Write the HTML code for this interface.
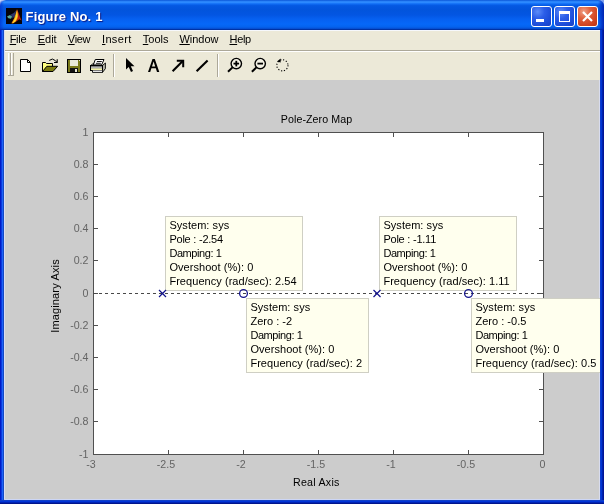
<!DOCTYPE html>
<html><head><meta charset="utf-8"><title>Figure No. 1</title>
<style>
html,body{margin:0;padding:0;background:#fff;}
body{width:604px;height:504px;overflow:hidden;position:relative;font-family:"Liberation Sans",sans-serif;}
#win{position:absolute;left:0;top:0;width:604px;height:504px;overflow:hidden;background:#0831d9;will-change:transform;}
#titlebar{position:absolute;left:0;top:0;width:604px;height:30px;border-radius:6px 6px 0 0;
background:linear-gradient(to bottom,#0a56d8 0%,#2f8cff 6%,#2a88ff 9%,#0f6cf4 13%,#0458e2 19%,#0254dc 33%,#0356e2 50%,#0660f0 63%,#0668f8 80%,#0564f0 88%,#0558e0 93.3%,#0448c8 96.6%,#0030a0 98.5%,#002e9a 100%);}
#title{position:absolute;left:25.6px;top:9px;font:bold 13px "Liberation Sans",sans-serif;color:#fff;text-shadow:1px 1px 1px #0a1883;white-space:nowrap;letter-spacing:0.15px;}
#lb{position:absolute;left:0;top:30px;width:4px;height:474px;background:linear-gradient(to right,#001ac8 0,#001ac8 25%,#0a3ade 25%,#0a3ade 50%,#1c62f8 50%,#1c62f8 75%,#1448c4 75%,#1448c4 100%);}
#rb{position:absolute;left:600px;top:30px;width:4px;height:474px;background:linear-gradient(to right,#0c3cd0 0,#0c3cd0 25%,#0034d4 25%,#0034d4 50%,#0022ac 50%,#0022ac 75%,#001498 75%,#001498 100%);}
#bb{position:absolute;left:0;top:500px;width:604px;height:4px;background:linear-gradient(to bottom,#1040c8 0,#1040c8 25%,#0034d8 25%,#0034d8 50%,#0024b4 50%,#0024b4 75%,#00148c 75%,#00148c 100%);}
#client{position:absolute;left:4px;top:30px;width:596px;height:470px;background:#ece9d8;}
#menubar{position:absolute;left:0;top:0;width:596px;height:20px;background:#ece9d8;}
.mi{position:absolute;top:3px;font:11px "Liberation Sans",sans-serif;color:#000;white-space:nowrap;transform-origin:0 0;}
.mi u{text-decoration:underline;text-underline-offset:1px;}
#sep1{position:absolute;left:0;top:20px;width:596px;height:1px;background:#aca899;}
#sep2{position:absolute;left:0;top:21px;width:596px;height:1px;background:#fff;}
#toolbar{position:absolute;left:0;top:22px;width:596px;height:28px;background:#ece9d8;}
#fig{position:absolute;left:1px;top:50px;width:595px;height:419px;background:#cccccc;overflow:hidden;}
.tip{position:absolute;background:#ffffee;border:1px solid #cfcfc4;box-sizing:border-box;font:11px/14px "Liberation Sans",sans-serif;color:#000;white-space:nowrap;padding:1px 0 0 3.4px;}
.tl{position:absolute;font:10.67px "Liberation Sans",sans-serif;color:#646464;white-space:nowrap;line-height:12px;height:12px;}
.lab{position:absolute;font:10.67px "Liberation Sans",sans-serif;color:#000;white-space:nowrap;line-height:12px;height:12px;}
.cb{position:absolute;top:6px;width:21px;height:21px;box-sizing:border-box;border:1px solid #fff;border-radius:3px;}
.cbb{background:radial-gradient(circle at 30% 25%,#5c8cf8 0%,#2c5ee8 35%,#1c4cd8 70%,#1840c4 100%);}
.cbr{background:radial-gradient(circle at 30% 25%,#f0a088 0%,#e0603c 35%,#d04420 70%,#b83414 100%);}
</style></head><body>
<div id="win">
<div style="position:absolute;left:0;top:0;width:604px;height:10px;background:linear-gradient(to right,#c8d8f8 0,#c8d8f8 50%,#7f9fec 50%,#7f9fec 100%)"></div>
<div id="titlebar"><div style="position:absolute;right:0;top:0;width:6px;height:30px;border-radius:0 6px 0 0;background:linear-gradient(to right,rgba(0,40,190,0) 0,rgba(0,40,190,0.55) 50%,rgba(0,30,170,0.9) 100%)"></div><div style="position:absolute;left:0;top:0;width:4px;height:30px;border-radius:6px 0 0 0;background:linear-gradient(to right,rgba(0,40,200,0.6) 0,rgba(0,60,220,0) 100%)"></div></div>
<svg style="position:absolute;left:6px;top:8px" width="16" height="16" viewBox="0 0 16 16">
<rect width="16" height="16" fill="#05030a"/>
<path d="M1 8.6 L4 7 L6.2 8.6 L5 10.8 L2.4 10.2 Z" fill="#5aa896"/>
<path d="M4 7 L8 4.8 L10 2.6 L9.4 8 L6.4 10.4 L6.2 8.6 Z" fill="#2c3468"/>
<path d="M9 14.5 L10 9 L11 1.2 L12.6 5 L14 9 L15.6 12.4 L13.4 11.2 L11.6 12.4 Z" fill="#b8200f"/>
<path d="M5.4 15.2 L8 10.6 L9.6 6 L11 1.2 L12 6 L11.7 10 L9.8 13.6 L7 15.6 Z" fill="#f08a12"/>
<path d="M6.6 15 L9.2 10 L10.5 5 L11 2.6 L11.5 8.6 L9.9 12.5 L8 14.6 Z" fill="#ffe030"/>
</svg>
<div id="title">Figure No. 1</div>
<div class="cb cbb" style="left:531px"><div style="position:absolute;left:4px;top:12px;width:8px;height:3px;background:#fff"></div></div>
<div class="cb cbb" style="left:554px"><div style="position:absolute;left:4px;top:4px;width:11px;height:11px;box-sizing:border-box;border:1px solid #fff;border-top:3px solid #fff"></div></div>
<div class="cb cbr" style="left:577px"><svg style="position:absolute;left:0;top:0" width="19" height="19" viewBox="0 0 19 19"><path d="M5 5 L14 14 M14 5 L5 14" stroke="#fff" stroke-width="2.2" stroke-linecap="butt"/></svg></div>
<div id="lb"></div><div id="rb"></div><div id="bb"></div>
<div id="client">
<div id="menubar">
<div style="position:absolute;left:0;top:0;width:596px;height:1px;background:#f6f8fc"></div>
<div class="mi" style="left:5.7px;letter-spacing:-0.3px"><u>F</u>ile</div>
<div class="mi" style="left:33.7px;letter-spacing:0px"><u>E</u>dit</div>
<div class="mi" style="left:63.8px;letter-spacing:-0.3px"><u>V</u>iew</div>
<div class="mi" style="left:98.0px;letter-spacing:0.35px"><u>I</u>nsert</div>
<div class="mi" style="left:138.8px;letter-spacing:0px"><u>T</u>ools</div>
<div class="mi" style="left:175.4px;letter-spacing:0px"><u>W</u>indow</div>
<div class="mi" style="left:225.5px;letter-spacing:-0.3px"><u>H</u>elp</div>
</div>
<div id="sep1"></div><div id="sep2"></div>
<div id="toolbar">
<svg style="position:absolute;left:0;top:0" width="596" height="28" viewBox="4 52 596 28" shape-rendering="crispEdges">
<rect x="8" y="53" width="1" height="22" fill="#fff"/>
<rect x="10" y="53" width="1" height="23" fill="#aca899"/>
<rect x="8" y="75" width="3" height="1" fill="#aca899"/>
<rect x="11" y="53" width="1" height="22" fill="#fff"/>
<rect x="13" y="53" width="1" height="23" fill="#aca899"/>
<rect x="11" y="75" width="3" height="1" fill="#aca899"/>
<rect x="113" y="54" width="1" height="23" fill="#aca899"/>
<rect x="114" y="54" width="1" height="23" fill="#fff"/>
<rect x="217" y="54" width="1" height="23" fill="#aca899"/>
<rect x="218" y="54" width="1" height="23" fill="#fff"/>
</svg>
<svg style="position:absolute;left:0;top:0" width="596" height="28" viewBox="4 52 596 28">
<path d="M20.5 59.5 H27.5 L30.5 62.5 V71.5 H20.5 Z" fill="#fff" stroke="#000" stroke-width="1"/>
<path d="M27.5 59.5 V62.5 H30.5" fill="none" stroke="#000" stroke-width="1"/>
<path d="M42.5 71.5 V62.5 H45.5 L46.5 63.5 H52.5 V66.5 H42.5 Z" fill="#ffff80" stroke="#000" stroke-width="1"/>
<path d="M43 66 H52 V71 H43 Z" fill="#ffff80"/>
<path d="M42.5 71.5 L46.8 66.3 H57.6 L53 71.5 Z" fill="#7a7a10" stroke="#000" stroke-width="1"/>
<path d="M49.3 60.4 Q52.4 57.6 55.4 60.6 L56.6 62" fill="none" stroke="#000" stroke-width="1"/>
<path d="M54 62.5 H57.2 V59.3" fill="none" stroke="#000" stroke-width="1.1"/>
<rect x="67.5" y="59.5" width="13" height="13" fill="#7a7a1a" stroke="#000" stroke-width="1"/>
<rect x="70" y="60" width="8" height="6" fill="#e8e8d8"/>
<rect x="70" y="68" width="8" height="4" fill="#111"/>
<rect x="75" y="69" width="2" height="3" fill="#e8e8d8"/>
<rect x="79" y="60" width="1" height="1" fill="#e8e8d8"/>
<path d="M102.5 65.5 L105.4 63 V68.6 L102.5 72.4 Z" fill="#b4b4a6" stroke="#000" stroke-width="0.9"/>
<path d="M90.5 65.6 L93.2 63.6 H102" fill="none" stroke="#000" stroke-width="0.9"/>
<path d="M93.3 64.9 L95.3 59.5 H104 L101.6 64.9 Z" fill="#fff" stroke="#000" stroke-width="1"/>
<path d="M96.9 61.5 H101.8 M95.9 63.3 H100.8" stroke="#000" stroke-width="0.9"/>
<rect x="90.5" y="65.6" width="12" height="4.9" fill="#fff" stroke="#000" stroke-width="1"/>
<path d="M90 65.8 H103" stroke="#000" stroke-width="1.3"/>
<rect x="91" y="68.3" width="11" height="1.7" fill="#f6f6a8"/>
<path d="M91 67.9 H102" stroke="#333" stroke-width="0.6"/>
<path d="M92.5 70.5 V72.4 H102.5 V70.5" fill="#fff" stroke="#000" stroke-width="0.9"/>
<path d="M126 58 V69.5 L128.7 67 L131 72 L133 71 L130.8 66.3 L134.5 66.3 Z" fill="#000"/>
<path d="M148 72 L152.5 59 H154.8 L159.3 72 H157 L155.8 68.3 H151.4 L150.2 72 Z M152 66.5 H155.2 L153.6 61.5 Z" fill="#000" fill-rule="evenodd"/>
<path d="M172.6 71.2 L183 60.8" stroke="#000" stroke-width="2.1" fill="none"/>
<path d="M176.8 60.8 H183.2 V67.2" stroke="#000" stroke-width="2" fill="none"/>
<path d="M196.6 71.2 L207.6 60.4" stroke="#000" stroke-width="2.1" fill="none"/>
<circle cx="236.3" cy="63.6" r="5.2" fill="#f4f2e6" stroke="#000" stroke-width="1.4"/>
<path d="M232.5 67.4 L228.0 71.8" stroke="#000" stroke-width="2"/>
<path d="M233.5 63.6 H239.10000000000002" stroke="#000" stroke-width="1.8"/>
<path d="M236.3 60.800000000000004 V66.4" stroke="#000" stroke-width="1.8"/>
<circle cx="260.2" cy="63.6" r="5.2" fill="#f4f2e6" stroke="#000" stroke-width="1.4"/>
<path d="M256.4 67.4 L251.89999999999998 71.8" stroke="#000" stroke-width="2"/>
<path d="M257.4 63.6 H263.0" stroke="#000" stroke-width="1.8"/>
<circle cx="282.4" cy="65.3" r="5.6" fill="none" stroke="#000" stroke-width="1.1" stroke-dasharray="1.2 1.73"/>
<path d="M277 61.6 L280.6 58.6 L280.6 62.4 Z" fill="#000"/>
</svg></div>
<div id="fig">
<div style="position:absolute;left:594px;top:0;width:1px;height:419px;background:#d8dcee"></div>
<svg style="position:absolute;left:0;top:0" width="595" height="419" viewBox="5 80 595 419" shape-rendering="crispEdges">
<rect x="93.5" y="132.5" width="450" height="322" fill="#fff" stroke="#505050" stroke-width="1"/>
<path d="M168.5 454 V450 M168.5 133 V137 M243.5 454 V450 M243.5 133 V137 M318.5 454 V450 M318.5 133 V137 M393.5 454 V450 M393.5 133 V137 M468.5 454 V450 M468.5 133 V137 M94 164.5 H98 M543 164.5 H539 M94 196.5 H98 M543 196.5 H539 M94 228.5 H98 M543 228.5 H539 M94 260.5 H98 M543 260.5 H539 M94 293.5 H98 M543 293.5 H539 M94 325.5 H98 M543 325.5 H539 M94 357.5 H98 M543 357.5 H539 M94 389.5 H98 M543 389.5 H539 M94 421.5 H98 M543 421.5 H539" stroke="#505050" stroke-width="1" fill="none"/>
<path d="M93 293.5 H543" stroke="#484848" stroke-width="1" stroke-dasharray="3 3" fill="none"/>
</svg>
<div class="tl" style="right:511.5px;top:46px">1</div>
<div class="tl" style="right:511.5px;top:78px">0.8</div>
<div class="tl" style="right:511.5px;top:110px">0.6</div>
<div class="tl" style="right:511.5px;top:142px">0.4</div>
<div class="tl" style="right:511.5px;top:174px">0.2</div>
<div class="tl" style="right:511.5px;top:207px">0</div>
<div class="tl" style="right:511.5px;top:239px">-0.2</div>
<div class="tl" style="right:511.5px;top:271px">-0.4</div>
<div class="tl" style="right:511.5px;top:303px">-0.6</div>
<div class="tl" style="right:511.5px;top:335px">-0.8</div>
<div class="tl" style="right:511.5px;top:368px">-1</div>
<div class="tl" style="left:66.0px;width:40px;text-align:center;top:378px">-3</div>
<div class="tl" style="left:141.0px;width:40px;text-align:center;top:378px">-2.5</div>
<div class="tl" style="left:216.0px;width:40px;text-align:center;top:378px">-2</div>
<div class="tl" style="left:291.0px;width:40px;text-align:center;top:378px">-1.5</div>
<div class="tl" style="left:366.0px;width:40px;text-align:center;top:378px">-1</div>
<div class="tl" style="left:441.0px;width:40px;text-align:center;top:378px">-0.5</div>
<div class="tl" style="left:517.5px;width:40px;text-align:center;top:378px">0</div>
<div class="lab" style="left:261.5px;width:100px;text-align:center;top:33px;letter-spacing:0.08px">Pole-Zero Map</div>
<div class="lab" style="left:261.3px;width:100px;text-align:center;top:396px;letter-spacing:0.25px">Real Axis</div>
<div class="lab" style="left:-0.5px;width:100px;text-align:center;top:209.8px;font-size:11px;letter-spacing:0.15px;transform:rotate(-90deg)">Imaginary Axis</div>
<div class="tip" style="left:160px;top:136px;width:138px;height:75px"><span style="letter-spacing:0.05px">System: sys</span><br><span style="letter-spacing:-0.23px">Pole : -2.54</span><br><span style="letter-spacing:-0.42px">Damping: 1</span><br><span style="letter-spacing:0.05px">Overshoot (%): 0</span><br><span style="letter-spacing:0.05px">Frequency (rad/sec): 2.54</span></div>
<div class="tip" style="left:241px;top:218px;width:123px;height:75px"><span style="letter-spacing:0.05px">System: sys</span><br><span style="letter-spacing:0.02px">Zero : -2</span><br><span style="letter-spacing:-0.42px">Damping: 1</span><br><span style="letter-spacing:0.05px">Overshoot (%): 0</span><br><span style="letter-spacing:0.05px">Frequency (rad/sec): 2</span></div>
<div class="tip" style="left:374px;top:136px;width:138px;height:75px"><span style="letter-spacing:0.05px">System: sys</span><br><span style="letter-spacing:-0.23px">Pole : -1.11</span><br><span style="letter-spacing:-0.42px">Damping: 1</span><br><span style="letter-spacing:0.05px">Overshoot (%): 0</span><br><span style="letter-spacing:0.05px">Frequency (rad/sec): 1.11</span></div>
<div class="tip" style="left:466px;top:218px;width:140px;height:75px"><span style="letter-spacing:0.05px">System: sys</span><br><span style="letter-spacing:0.02px">Zero : -0.5</span><br><span style="letter-spacing:-0.42px">Damping: 1</span><br><span style="letter-spacing:0.05px">Overshoot (%): 0</span><br><span style="letter-spacing:0.05px">Frequency (rad/sec): 0.5</span></div>
<svg style="position:absolute;left:0;top:0" width="595" height="419" viewBox="5 80 595 419">
<path d="M159.0 290 L166.0 297 M166.0 290 L159.0 297" stroke="#12128c" stroke-width="1.2" fill="none"/>
<path d="M373.5 290 L380.5 297 M380.5 290 L373.5 297" stroke="#12128c" stroke-width="1.2" fill="none"/>
<circle cx="243.5" cy="293.5" r="3.9" stroke="#12128c" stroke-width="1.3" fill="none"/>
<circle cx="468.5" cy="293.5" r="3.9" stroke="#12128c" stroke-width="1.3" fill="none"/>
</svg></div>
<div style="position:absolute;left:0;top:0;width:1px;height:470px;background:#d8dcf2"></div>
<div style="position:absolute;left:0;top:469px;width:596px;height:1px;background:#ccd6f6"></div>
</div>
</div>
</body></html>
